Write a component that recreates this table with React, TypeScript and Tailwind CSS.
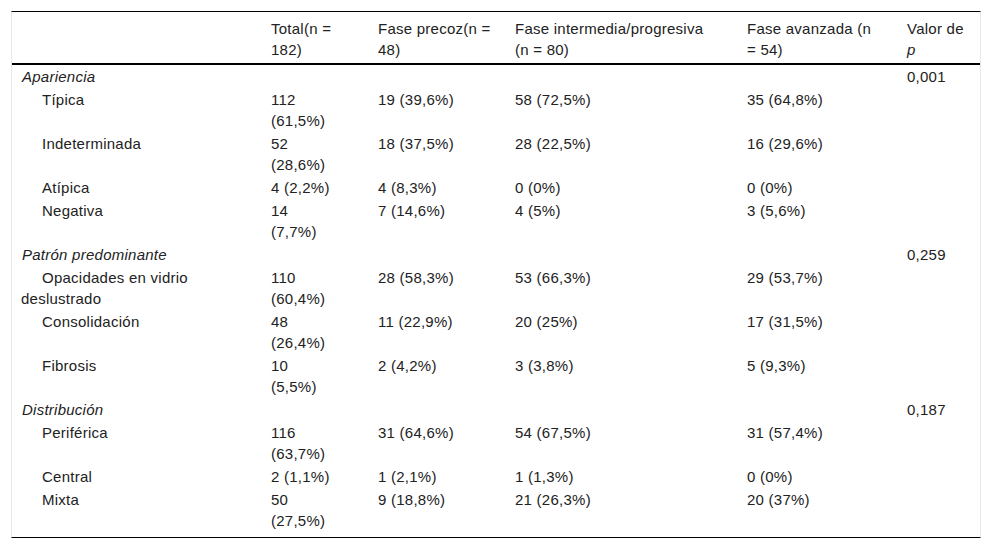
import React from 'react';

type Row = {
  label: string;
  cat?: boolean;
  total?: string;
  precoz?: string;
  inter?: string;
  avanz?: string;
  p?: string;
};

const rows: Row[] = [
  { label: 'Apariencia', cat: true, p: '0,001' },
  { label: 'Típica', total: '112 (61,5%)', precoz: '19 (39,6%)', inter: '58 (72,5%)', avanz: '35 (64,8%)' },
  { label: 'Indeterminada', total: '52 (28,6%)', precoz: '18 (37,5%)', inter: '28 (22,5%)', avanz: '16 (29,6%)' },
  { label: 'Atípica', total: '4 (2,2%)', precoz: '4 (8,3%)', inter: '0 (0%)', avanz: '0 (0%)' },
  { label: 'Negativa', total: '14 (7,7%)', precoz: '7 (14,6%)', inter: '4 (5%)', avanz: '3 (5,6%)' },
  { label: 'Patrón predominante', cat: true, p: '0,259' },
  { label: 'Opacidades en vidrio deslustrado', total: '110 (60,4%)', precoz: '28 (58,3%)', inter: '53 (66,3%)', avanz: '29 (53,7%)' },
  { label: 'Consolidación', total: '48 (26,4%)', precoz: '11 (22,9%)', inter: '20 (25%)', avanz: '17 (31,5%)' },
  { label: 'Fibrosis', total: '10 (5,5%)', precoz: '2 (4,2%)', inter: '3 (3,8%)', avanz: '5 (9,3%)' },
  { label: 'Distribución', cat: true, p: '0,187' },
  { label: 'Periférica', total: '116 (63,7%)', precoz: '31 (64,6%)', inter: '54 (67,5%)', avanz: '31 (57,4%)' },
  { label: 'Central', total: '2 (1,1%)', precoz: '1 (2,1%)', inter: '1 (1,3%)', avanz: '0 (0%)' },
  { label: 'Mixta', total: '50 (27,5%)', precoz: '9 (18,8%)', inter: '21 (26,3%)', avanz: '20 (37%)' },
];

// per-column right padding keeps the wrapping the same as the source table
const pad = ['pl-[9px] pr-[20px]', 'pl-[9px] pr-[34px]', 'pl-[9px] pr-[8px]', 'pl-[9px] pr-[28px]', 'pl-[9px] pr-[21px]', 'pl-[9px] pr-[10px]'];

export default function App() {
  return (
    <div
      className="bg-white p-[11px] text-[15px] leading-[21px] tracking-[0.25px] text-[#222]"
      style={{ fontFamily: '"Liberation Sans", Arial, sans-serif' }}
    >
      <div className="border-t border-t-black border-b border-b-black border-x border-x-[#e8e8e8]">
        <table className="w-full table-fixed border-collapse">
          <colgroup>
            <col className="w-[250px]" />
            <col className="w-[107px]" />
            <col className="w-[137px]" />
            <col className="w-[232px]" />
            <col className="w-[160px]" />
            <col className="w-[82px]" />
          </colgroup>
          <thead>
            <tr className="border-b-2 border-black">
              <th className={`${pad[0]} pt-[6px] pb-[3px] text-left font-normal align-top`}></th>
              <th className={`${pad[1]} pt-[6px] pb-[3px] text-left font-normal align-top`}>Total(n = 182)</th>
              <th className={`${pad[2]} pt-[6px] pb-[3px] text-left font-normal align-top`}>Fase precoz(n = 48)</th>
              <th className={`${pad[3]} pt-[6px] pb-[3px] text-left font-normal align-top`}>Fase intermedia/progresiva (n = 80)</th>
              <th className={`${pad[4]} pt-[6px] pb-[3px] text-left font-normal align-top`}>Fase avanzada (n = 54)</th>
              <th className={`${pad[5]} pt-[6px] pb-[3px] text-left font-normal align-top`}>
                Valor de <i>p</i>
              </th>
            </tr>
          </thead>
          <tbody>
            {rows.map((r, i) => {
              const py = i === rows.length - 1 ? 'pt-px pb-[6px]' : 'py-px';
              return (
                <tr key={r.label}>
                  <td className={`${pad[0]} ${py} align-top ${r.cat ? 'italic indent-[1px]' : 'indent-[21px]'}`}>{r.label}</td>
                  <td className={`${pad[1]} ${py} align-top`}>{r.total}</td>
                  <td className={`${pad[2]} ${py} align-top`}>{r.precoz}</td>
                  <td className={`${pad[3]} ${py} align-top`}>{r.inter}</td>
                  <td className={`${pad[4]} ${py} align-top`}>{r.avanz}</td>
                  <td className={`${pad[5]} ${py} align-top`}>{r.p}</td>
                </tr>
              );
            })}
          </tbody>
        </table>
      </div>
    </div>
  );
}
